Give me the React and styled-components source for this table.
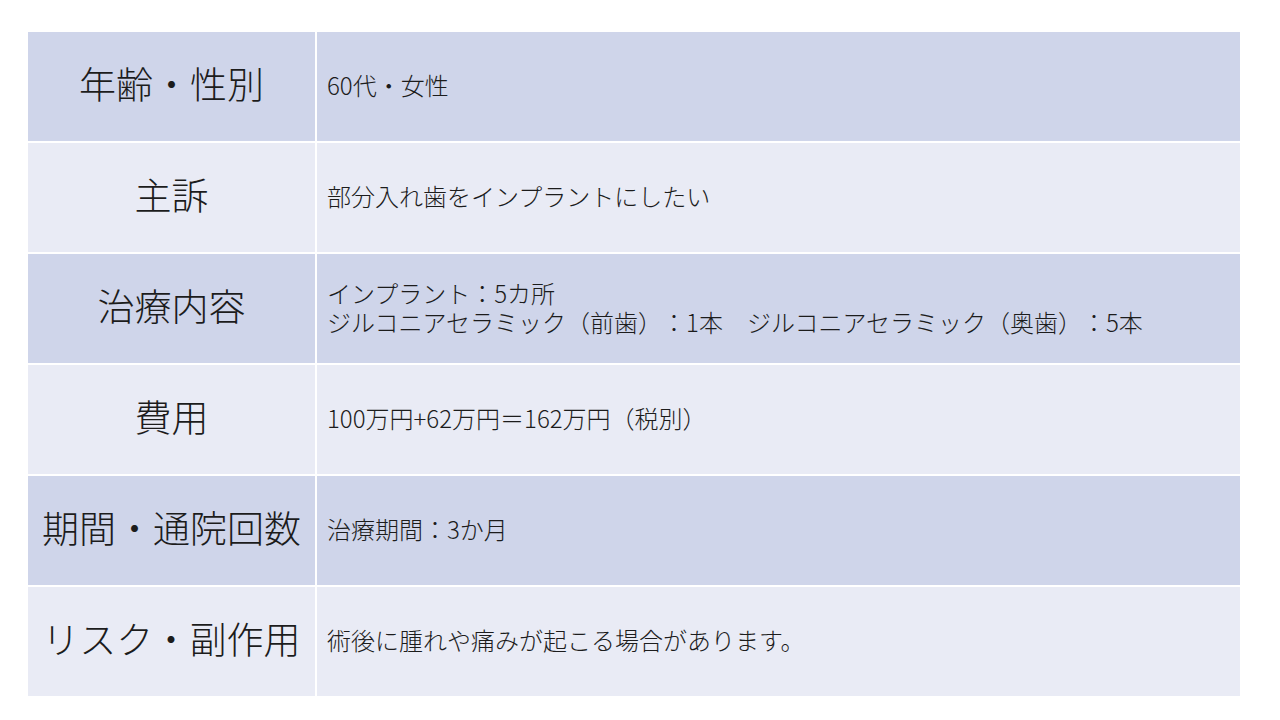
import { createGlobalStyle } from "styled-components";
import styled from "styled-components";

const GlobalStyle = createGlobalStyle`
  html, body {
    margin: 0;
    padding: 0;
    background: #ffffff;
  }
  body {
    font-family: "Noto Sans CJK JP", "Noto Sans", sans-serif;
    color: #1c1c1c;
    text-spacing-trim: space-all;
  }
`;

const Page = styled.div`
  width: 1280px;
  height: 720px;
  padding: 32px 40px 0 28px;
  box-sizing: border-box;
`;

const Table = styled.div`
  display: grid;
  grid-template-columns: 287px 1fr;
  grid-auto-rows: 109px;
  column-gap: 2px;
  row-gap: 2px;
  width: 1212px;
  background: #ffffff;
`;

const Label = styled.div`
  display: flex;
  align-items: center;
  justify-content: center;
  padding-bottom: 7px;
  box-sizing: border-box;
  background: ${(p) => (p.$dark ? "#cfd5ea" : "#e9ebf5")};
  font-size: 37px;
  font-weight: 300;
  white-space: nowrap;
`;

const Value = styled.div`
  display: flex;
  flex-direction: column;
  justify-content: center;
  padding: 0 0 4px 10px;
  box-sizing: border-box;
  background: ${(p) => (p.$dark ? "#cfd5ea" : "#e9ebf5")};
  font-size: 24px;
  font-weight: 300;
  line-height: 29px;
  white-space: nowrap;
`;

const rows = [
  { label: "年齢・性別", lines: ["60代・女性"] },
  { label: "主訴", lines: ["部分入れ歯をインプラントにしたい"] },
  {
    label: "治療内容",
    lines: [
      "インプラント：5カ所",
      "ジルコニアセラミック（前歯）：1本　ジルコニアセラミック（奥歯）：5本",
    ],
  },
  { label: "費用", lines: ["100万円+62万円＝162万円（税別）"] },
  { label: "期間・通院回数", lines: ["治療期間：3か月"] },
  { label: "リスク・副作用", lines: ["術後に腫れや痛みが起こる場合があります。"] },
];

const App = () => {
  return (
    <Page>
      <GlobalStyle />
      <Table>
        {rows.map((row, i) => (
          <>
            <Label key={"l" + i} $dark={i % 2 === 0}>
              {row.label}
            </Label>
            <Value key={"v" + i} $dark={i % 2 === 0}>
              {row.lines.map((line) => (
                <span key={line}>{line}</span>
              ))}
            </Value>
          </>
        ))}
      </Table>
    </Page>
  );
};

export default App;
